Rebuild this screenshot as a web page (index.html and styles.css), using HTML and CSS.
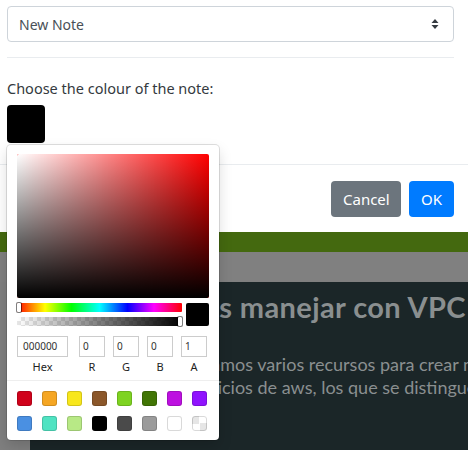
FILE: index.html
```html
<!DOCTYPE html>
<html>
<head>
<meta charset="utf-8">
<link rel="stylesheet" href="styles.css">
</head>
<body>
<div class="modal">
  <div class="modal-body">
    <div class="select">
      <span>New Note</span>
      <svg class="arrows" width="8" height="12" viewBox="0 0 8 12"><path d="M4 1L7.5 5H0.5Z M4 11L7.5 7H0.5Z" fill="#343a40"/></svg>
    </div>
    <hr class="rule">
    <p class="label">Choose the colour of the note:</p>
    <div class="swatch"></div>
  </div>
  <div class="modal-footer">
    <button class="btn btn-cancel">Cancel</button>
    <button class="btn btn-ok">OK</button>
  </div>
</div>
<div class="page">
  <div class="navbar"></div>
  <div class="band"></div>
  <div class="hero-row">
    <div class="strip"></div>
    <div class="hero">
      <h1 class="hero-title">Qué podemos manejar con VPC</h1>
      <p class="hero-text">En AWS utilizamos varios recursos para crear nuestra red<br>y muchos servicios de aws, los que se distinguen</p>
    </div>
  </div>
</div>

<div class="picker">
  <div class="sat">
    <div class="sat-white"></div>
    <div class="sat-black"></div>
  </div>
  <div class="controls">
    <div class="sliders">
      <div class="hue"><div class="hue-ptr"></div></div>
      <div class="alpha"><div class="alpha-grad"></div><div class="alpha-ptr"></div></div>
    </div>
    <div class="preview"></div>
  </div>
  <div class="fields">
    <div class="field f-hex"><div class="inp">000000</div><div class="lbl">Hex</div></div>
    <div class="field"><div class="inp">0</div><div class="lbl">R</div></div>
    <div class="field"><div class="inp">0</div><div class="lbl">G</div></div>
    <div class="field"><div class="inp">0</div><div class="lbl">B</div></div>
    <div class="field"><div class="inp">1</div><div class="lbl">A</div></div>
  </div>
  <div class="presets">
    <div class="p" style="background:#D0021B"></div>
    <div class="p" style="background:#F5A623"></div>
    <div class="p" style="background:#F8E71C"></div>
    <div class="p" style="background:#8B572A"></div>
    <div class="p" style="background:#7ED321"></div>
    <div class="p" style="background:#417505"></div>
    <div class="p" style="background:#BD10E0"></div>
    <div class="p" style="background:#9013FE"></div>
    <div class="p" style="background:#4A90E2"></div>
    <div class="p" style="background:#50E3C2"></div>
    <div class="p" style="background:#B8E986"></div>
    <div class="p" style="background:#000000"></div>
    <div class="p" style="background:#4A4A4A"></div>
    <div class="p" style="background:#9B9B9B"></div>
    <div class="p" style="background:#FFFFFF"></div>
    <div class="p p-clear"></div>
  </div>
</div>
</body>
</html>
```
FILE: styles.css
```css
* { box-sizing: border-box; }
html, body { margin: 0; padding: 0; }
body {
  width: 468px;
  height: 450px;
  overflow: hidden;
  position: relative;
  font-family: "Noto Sans", "Open Sans", sans-serif;
  background: #808080;
}
.modal {
  background: #fff;
  height: 232px;
  display: flex;
  flex-direction: column;
}
.modal-body {
  padding: 6px 14px 0 7px;
  height: 164px;
}
.select {
  height: 36px;
  border: 1px solid #ced4da;
  border-radius: 4px;
  display: flex;
  align-items: center;
  justify-content: space-between;
  padding: 0 14px 0 11px;
  font-size: 14px;
  color: #495057;
}
.arrows { display: block; }
.rule {
  border: 0;
  border-top: 1px solid #e9ecef;
  margin: 15px 0 0;
}
.label {
  margin: 20px 0 0;
  font-size: 14.5px;
  line-height: 20px;
  color: #343a40;
}
.swatch {
  margin-top: 7px;
  width: 38px;
  height: 38px;
  background: #000;
  border-radius: 4px;
}
.modal-footer {
  border-top: 1px solid #e9ecef;
  display: flex;
  justify-content: flex-end;
  gap: 8px;
  padding: 16px 14px 0 0;
}
.btn {
  height: 36px;
  border: 0;
  border-radius: 4px;
  color: #fff;
  font-family: inherit;
  font-size: 15px;
  padding: 0 12px;
}
.btn-cancel { background: #6c757d; width: 70px; }
.btn-ok { background: #007bff; width: 45px; }

.navbar { height: 20px; background: #44690f; }
.band { height: 30px; background: #808080; }
.hero-row { display: flex; height: 168px; }
.strip { width: 30px; background: #7f7f7f; }
.hero {
  flex: 1;
  background: #1b2628;
  overflow: hidden;
  white-space: nowrap;
  padding: 7px 0 0 0;
  color: #8a8f90;
}
.hero-title {
  margin: 0 0 0 17px;
  font-family: "Lato", sans-serif;
  font-weight: 700;
  font-size: 29px;
  letter-spacing: 0.4px;
  line-height: 36px;
}
.hero-text {
  margin: 28px 0 0 75px;
  font-family: "Lato", sans-serif;
  font-size: 18px;
  line-height: 23px;
}

.picker {
  position: absolute;
  left: 7px;
  top: 145px;
  width: 212px;
  height: 295px;
  background: #fff;
  border-radius: 4px;
  box-shadow: 0 0 0 1px rgba(0,0,0,0.12), 0 6px 14px rgba(0,0,0,0.15);
  padding: 9px 10px 0;
}
.sat {
  position: relative;
  height: 144px;
  background: #f00;
  border-radius: 2px;
  overflow: hidden;
}
.sat-white, .sat-black { position: absolute; inset: 0; }
.sat-white { background: linear-gradient(to right, #fff, rgba(255,255,255,0)); }
.sat-black { background: linear-gradient(to top, #000, rgba(0,0,0,0)); }
.controls { display: flex; margin-top: 5px; }
.sliders { flex: 1; }
.hue {
  position: relative;
  height: 9px;
  background: linear-gradient(to right, #f00 0%, #ff0 17%, #0f0 33%, #0ff 50%, #00f 67%, #f0f 83%, #f00 100%);
  border-radius: 1px;
}
.hue-ptr, .alpha-ptr {
  position: absolute;
  top: 0;
  width: 4px;
  height: 9px;
  background: #fff;
  border-radius: 1px;
  box-shadow: 0 0 0 1px rgba(0,0,0,0.5);
}
.hue-ptr { left: 0; }
.alpha {
  position: relative;
  height: 9px;
  margin-top: 5px;
  background-color: #fff;
  background-image: conic-gradient(#e6e6e6 25%, #fff 0 50%, #e6e6e6 0 75%, #fff 0);
  background-size: 8px 8px;
}
.alpha-grad { position: absolute; inset: 0; background: linear-gradient(to right, rgba(0,0,0,0), #000); }
.alpha-ptr { right: 0; }
.preview {
  width: 23px;
  height: 23px;
  margin-left: 4px;
  background: #000;
  border-radius: 2px;
}
.fields { display: flex; margin-top: 10px; gap: 8px; }
.field { width: 26px; }
.field.f-hex { width: 51px; margin-right: 3px; }
.inp {
  height: 21px;
  box-shadow: inset 0 0 0 1px #ccc;
  font-size: 10px;
  line-height: 21px;
  padding-left: 4px;
  color: #333;
}
.f-hex .inp { padding-left: 6px; }
.lbl {
  text-align: center;
  font-size: 11px;
  line-height: 14px;
  color: #222;
  padding-top: 3px;
}
.presets {
  margin: 6px -10px 0;
  padding: 10px 0 0 10px;
  border-top: 1px solid #eee;
  display: grid;
  grid-template-columns: repeat(8, 15px);
  column-gap: 10px;
  row-gap: 10px;
}
.p {
  width: 15px;
  height: 15px;
  border-radius: 3px;
  box-shadow: inset 0 0 0 1px rgba(0,0,0,0.15);
}
.p-clear {
  background-color: #fff;
  background-image: conic-gradient(#fff 25%, #e6e6e6 0 50%, #fff 0 75%, #e6e6e6 0);
  background-size: 15px 15px;
}
```
